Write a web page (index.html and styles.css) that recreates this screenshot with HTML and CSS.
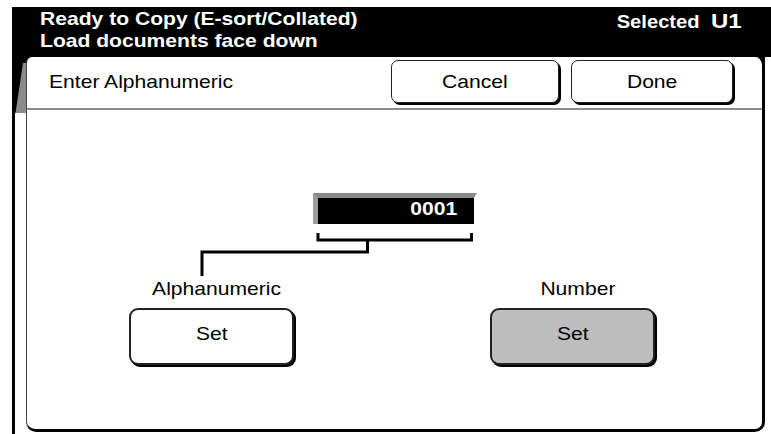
FILE: index.html
```html
<!DOCTYPE html>
<html>
<head>
<meta charset="utf-8">
<title>Enter Alphanumeric</title>
<link rel="stylesheet" href="styles.css">
</head>
<body>
<div class="screen">
  <header class="status">
    <div class="status-msg wide-l">
      <div>Ready to Copy (E-sort/Collated)</div>
      <div>Load documents face down</div>
    </div>
    <div class="status-sel wide-r">Selected <span class="sel-id">U1</span></div>
  </header>
  <div class="body">
    <div class="rail">
      <svg class="wedge" width="11" height="56" viewBox="0 0 11 56"><rect width="11" height="56" fill="#000"/><polygon points="8,6 11,6 11,56 0.5,56" fill="#8a8a8a"/></svg>
    </div>
    <section class="dialog">
      <div class="tabbar">
        <span class="title wide-l">Enter Alphanumeric</span>
        <div class="actions">
          <button class="btn btn-cancel"><span class="wide-c">Cancel</span></button>
          <button class="btn btn-done"><span class="wide-c">Done</span></button>
        </div>
      </div>
      <div class="panel">
        <div class="field"><span class="wide-r">0001</span></div>
        <svg class="connector" width="275" height="44" viewBox="0 0 275 44">
          <path d="M118 1V8H271.5V1" fill="none" stroke="#000" stroke-width="3"/>
          <path d="M167.5 8V20H2V44" fill="none" stroke="#000" stroke-width="3"/>
        </svg>
        <div class="options">
          <div class="option">
            <div class="opt-label"><span class="wide-c">Alphanumeric</span></div>
            <button class="set"><span class="wide-c">Set</span></button>
          </div>
          <div class="option">
            <div class="opt-label"><span class="wide-c">Number</span></div>
            <button class="set set-active"><span class="wide-c">Set</span></button>
          </div>
        </div>
      </div>
    </section>
  </div>
</div>
</body>
</html>
```
FILE: styles.css
```css
* { box-sizing: border-box; }
html, body { margin: 0; padding: 0; background: #fff; }
body { font-family: "Liberation Sans", Arial, sans-serif; color: #000; }

/* the panel's type is drawn slightly wider than the face's natural width */
.wide-l, .wide-r, .wide-c { display: inline-block; transform: scaleX(1.14); }
.wide-l { transform-origin: left center; }
.wide-r { transform-origin: right center; }
.wide-c { transform-origin: center center; }

.screen {
  width: 771px;
  height: 434px;
  padding-top: 7px;
  display: flex;
  flex-direction: column;
  overflow: hidden;
}

.status {
  margin-left: 12px;
  height: 50px;
  background: #000;
  color: #fff;
  display: flex;
  justify-content: space-between;
  align-items: flex-start;
  padding: 1px 29px 0 28px;
  font-weight: bold;
  font-size: 18.5px;
  line-height: 21.7px;
}
.status-msg { display: block; }
.status-sel {
  margin-top: 2px;
  font-size: 17.7px;
}
.sel-id {
  margin-left: 5px;
  font-size: 21px;
}

.body {
  flex: 1;
  display: flex;
  margin-left: 12px;
  background: linear-gradient(#000, #000) no-repeat 0 0 / 753px 10px;
}
.rail {
  width: 14px;
  border-left: 3px solid #000;
}
.wedge { display: block; }

.dialog {
  width: 739px;
  height: 375px;
  background: #fff;
  border-left: 1px solid #444;
  border-right: 3px solid #000;
  border-bottom: 3px solid #000;
  border-radius: 6px 9px 10px 10px;
  display: flex;
  flex-direction: column;
}

.tabbar {
  height: 53px;
  display: flex;
  align-items: flex-start;
  padding: 3px 29px 0 22px;
  border-bottom: 2px solid #8c8c8c;
  font-size: 18.5px;
  line-height: 22px;
}
.title { margin-top: 11px; }
.actions {
  margin-left: auto;
  display: flex;
  gap: 12px;
}
.btn {
  height: 43px;
  padding: 0;
  border: 1px solid #222;
  border-radius: 7px;
  box-shadow: 2px 2px 0 #000;
  background: #fff;
  color: #000;
  font-family: "Liberation Sans", Arial, sans-serif;
  font-size: 18.5px;
  line-height: 22px;
}
.btn-cancel { width: 168px; }
.btn-done { width: 162px; }

.panel {
  flex: 1;
  padding-top: 83px;
  font-size: 18.5px;
  line-height: 22px;
}

.field {
  margin-left: 286px;
  width: 164px;
  height: 31px;
  border-top: 5px solid #8a8a8a;
  border-left: 5px solid #9c9c9c;
  border-right: 3px solid transparent;
  background: #000;
  background-clip: padding-box;
  color: #fff;
  font-weight: bold;
  text-align: right;
  padding-right: 17px;
}

.connector {
  display: block;
  margin: 8px 0 0 173px;
}

.options {
  display: flex;
  gap: 196px;
  margin: 2px 0 0 102px;
}
.option {
  width: 165px;
  display: flex;
  flex-direction: column;
  align-items: center;
}
.opt-label { padding-left: 10px; }
.set {
  margin-top: 8px;
  width: 165px;
  height: 57px;
  padding: 0 0 5px 0;
  border: 2px solid #222;
  border-radius: 9px;
  box-shadow: 2px 2px 0 #000;
  background: #fff;
  color: #000;
  font-family: "Liberation Sans", Arial, sans-serif;
  font-size: 18.5px;
  line-height: 22px;
}
.set-active { background: #bebebe; }
```
